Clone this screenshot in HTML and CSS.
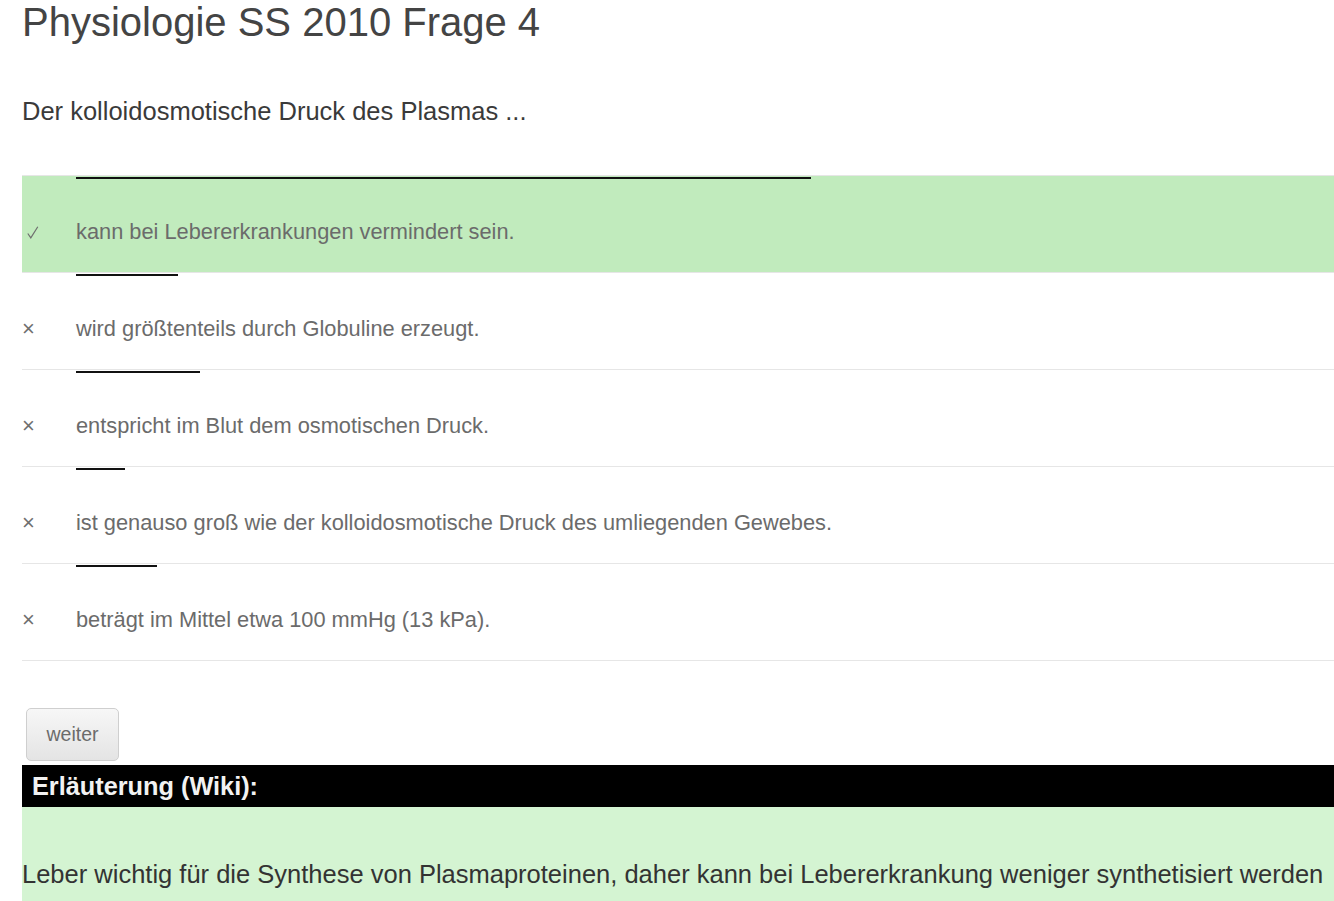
FILE: index.html
```html
<!DOCTYPE html>
<html lang="de">
<head>
<meta charset="utf-8">
<title>Physiologie SS 2010 Frage 4</title>
<link rel="stylesheet" href="styles.css">
</head>
<body>
<div class="page">
  <h1 class="title">Physiologie SS 2010 Frage 4</h1>
  <p class="question">Der kolloidosmotische Druck des Plasmas ...</p>
  <ul class="answers">
    <li class="answer correct">
      <div class="bar" style="width:735px"></div>
      <div class="line">
        <span class="mark"><svg width="12" height="13" viewBox="0 0 12 13"><polyline points="0.8,7.5 3.8,11.8 10.8,0.8" fill="none" stroke="#6f6f6f" stroke-width="1.2"/></svg></span>
        <span class="text">kann bei Lebererkrankungen vermindert sein.</span>
      </div>
    </li>
    <li class="answer">
      <div class="bar" style="width:102px"></div>
      <div class="line"><span class="mark">×</span><span class="text">wird größtenteils durch Globuline erzeugt.</span></div>
    </li>
    <li class="answer">
      <div class="bar" style="width:124px"></div>
      <div class="line"><span class="mark">×</span><span class="text">entspricht im Blut dem osmotischen Druck.</span></div>
    </li>
    <li class="answer">
      <div class="bar" style="width:49px"></div>
      <div class="line"><span class="mark">×</span><span class="text">ist genauso groß wie der kolloidosmotische Druck des umliegenden Gewebes.</span></div>
    </li>
    <li class="answer">
      <div class="bar" style="width:81px"></div>
      <div class="line"><span class="mark">×</span><span class="text">beträgt im Mittel etwa 100 mmHg (13 kPa).</span></div>
    </li>
  </ul>
  <div class="actions"><button class="btn" type="button">weiter</button></div>
  <div class="explain-head">Erläuterung (Wiki):</div>
  <div class="explain-body">
    <p class="explain-text">Leber wichtig für die Synthese von Plasmaproteinen, daher kann bei Lebererkrankung weniger synthetisiert werden</p>
  </div>
</div>
</body>
</html>
```

FILE: styles.css
```css
html, body {
  margin: 0;
  padding: 0;
  background: #ffffff;
}
body {
  font-family: "Liberation Sans", Helvetica, Arial, sans-serif;
  overflow: hidden;
}
.page {
  padding-left: 22px;
}
.title {
  margin: 0;
  font-size: 40px;
  line-height: 44px;
  font-weight: normal;
  color: #444444;
}
.question {
  margin: 52px 0 0;
  font-size: 25.5px;
  line-height: 30px;
  color: #3a3a3a;
}
.answers {
  list-style: none;
  margin: 49px 0 0;
  padding: 0;
  border-bottom: 1px solid #e6e6e6;
}
.answer {
  border-top: 1px solid #e6e6e6;
  padding: 1px 0 0;
  box-sizing: border-box;
  height: 97px;
}
.answer.correct {
  background: #c1ebbd;
}
.bar {
  height: 2px;
  margin-left: 54px;
  background: #111111;
}
.line {
  display: flex;
  align-items: baseline;
  margin-top: 40px;
  font-size: 21.8px;
  line-height: 26px;
  color: #6b6b6b;
}
.mark {
  width: 54px;
  flex: none;
  font-size: 22px;
  color: #6f6f6f;
}
.correct .mark {
  padding-left: 5px;
  box-sizing: border-box;
}
.actions {
  display: flex;
  margin-top: 47px;
  padding-left: 4px;
}
.btn {
  width: 93px;
  height: 53px;
  border: 1px solid #cfcfcf;
  border-radius: 5px;
  background: linear-gradient(#f7f7f7, #e4e4e4);
  font-family: "Liberation Sans", Helvetica, Arial, sans-serif;
  font-size: 19.5px;
  color: #6b6b6b;
  padding: 0;
}
.explain-head {
  margin-top: 4px;
  height: 42px;
  line-height: 42px;
  background: #000000;
  color: #f2f2f2;
  font-weight: bold;
  font-size: 25.3px;
  padding-left: 10px;
}
.explain-body {
  background: #d4f4d2;
  padding-top: 52px;
  min-height: 120px;
}
.explain-text {
  margin: 0;
  font-size: 25.5px;
  line-height: 30px;
  color: #333333;
  white-space: nowrap;
}
```
